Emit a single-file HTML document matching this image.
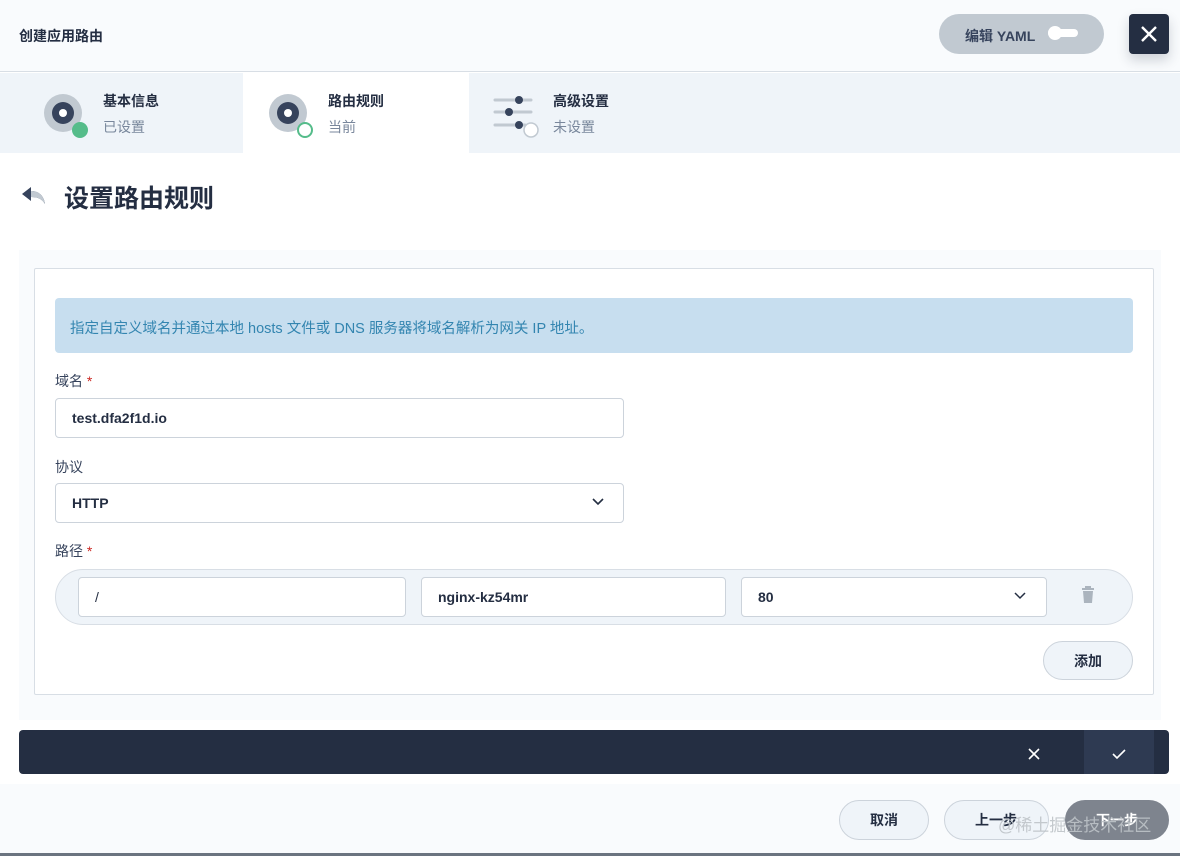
<!DOCTYPE html>
<html><head><meta charset="utf-8"><style>
*{box-sizing:border-box;margin:0;padding:0}
body{width:1180px;height:856px;position:relative;background:#fff;font-family:"Liberation Sans","Noto Sans CJK SC",sans-serif;color:#242e42;overflow:hidden}
.abs{position:absolute}
.inp{position:absolute;border:1px solid #ccd3db;border-radius:4px;background:#fff;font-size:14px;font-weight:bold;padding-left:16px;display:flex;align-items:center}
.btn{position:absolute;border:1px solid #ccd3db;border-radius:20px;background:#eff4f9;font-size:14px;font-weight:bold;display:flex;align-items:center;justify-content:center}
</style></head><body>
<div class="abs" style="left:0;top:0;width:1180px;height:72px;background:#f9fbfd;border-bottom:1px solid #d8dee5"></div>
<div class="abs" style="left:19px;top:26px;font-size:14px;font-weight:bold">创建应用路由</div>
<div class="abs" style="left:939px;top:14px;width:165px;height:40px;border-radius:20px;background:#c1c9d1"></div>
<div class="abs" style="left:965px;top:26px;font-size:14px;font-weight:bold;color:#36435c">编辑 YAML</div>
<div class="abs" style="left:1048px;top:29px;width:30px;height:8px;border-radius:4px;background:#fff"></div>
<div class="abs" style="left:1048px;top:26px;width:14px;height:14px;border-radius:7px;background:#fff"></div>
<div class="abs" style="left:1129px;top:14px;width:40px;height:40px;border-radius:4px;background:#242e42;box-shadow:0 6px 12px rgba(36,46,66,.2)"></div>
<svg class="abs" style="left:1139px;top:24px" width="20" height="20"><path d="M3 3L17 17M17 3L3 17" stroke="#fff" stroke-width="2.4"/></svg>

<div class="abs" style="left:0;top:73px;width:1180px;height:80px;background:#eff4f9"></div>
<div class="abs" style="left:243px;top:73px;width:226px;height:80px;background:#fff"></div>
<div class="abs" style="left:44px;top:94px;width:38px;height:38px;border-radius:50%;background:#c1c9d1"></div>
<div class="abs" style="left:52px;top:102px;width:22px;height:22px;border-radius:50%;background:#36435c"></div>
<div class="abs" style="left:59px;top:109px;width:8px;height:8px;border-radius:50%;background:#fff"></div>
<div class="abs" style="left:72px;top:122px;width:16px;height:16px;border-radius:50%;background:#55bc8a"></div>
<div class="abs" style="left:103px;top:91px;font-size:14px;font-weight:bold">基本信息</div>
<div class="abs" style="left:103px;top:117px;font-size:14px;color:#79879c">已设置</div>
<div class="abs" style="left:269px;top:94px;width:38px;height:38px;border-radius:50%;background:#c1c9d1"></div>
<div class="abs" style="left:277px;top:102px;width:22px;height:22px;border-radius:50%;background:#36435c"></div>
<div class="abs" style="left:284px;top:109px;width:8px;height:8px;border-radius:50%;background:#fff"></div>
<div class="abs" style="left:297px;top:122px;width:16px;height:16px;border-radius:50%;background:#fff;border:2px solid #55bc8a"></div>
<div class="abs" style="left:328px;top:91px;font-size:14px;font-weight:bold">路由规则</div>
<div class="abs" style="left:328px;top:117px;font-size:14px;color:#79879c">当前</div>
<svg class="abs" style="left:493px;top:94px" width="46" height="44">
<g stroke="#c1c9d1" stroke-width="3" stroke-linecap="round"><path d="M2 6H38M2 18H38M2 31H32"/></g>
<circle cx="26" cy="6" r="4" fill="#36435c"/><circle cx="16" cy="18" r="4" fill="#36435c"/><circle cx="26" cy="31" r="4" fill="#36435c"/>
<circle cx="38" cy="36" r="7" fill="#fff" stroke="#c1c9d1" stroke-width="1.5"/></svg>
<div class="abs" style="left:553px;top:91px;font-size:14px;font-weight:bold">高级设置</div>
<div class="abs" style="left:553px;top:117px;font-size:14px;color:#79879c">未设置</div>

<svg class="abs" style="left:21px;top:186px" width="26" height="20"><path d="M1 8L10 1V5C18 5 23 10 24 18C21 13 17 11 10 11V15Z" fill="#36435c"/><path d="M10 5C18 5 23 10 24 18C21 13 17 11 10 11Z" fill="#c1c9d1"/></svg>
<div class="abs" style="left:64px;top:179px;font-size:25px;font-weight:bold">设置路由规则</div>

<div class="abs" style="left:19px;top:250px;width:1142px;height:470px;background:#f9fbfd"></div>
<div class="abs" style="left:34px;top:268px;width:1120px;height:427px;background:#fff;border:1px solid #d8dee5;border-radius:2px"></div>
<div class="abs" style="left:55px;top:298px;width:1078px;height:55px;background:#c7deef;border-radius:4px"></div>
<div class="abs" style="left:70px;top:317px;font-size:14.5px;color:#3385b0">指定自定义域名并通过本地 hosts 文件或 DNS 服务器将域名解析为网关 IP 地址。</div>
<div class="abs" style="left:55px;top:371px;font-size:14px;color:#36435c">域名 <span style="color:#ca2621">*</span></div>
<div class="inp" style="left:55px;top:398px;width:569px;height:40px">test.dfa2f1d.io</div>
<div class="abs" style="left:55px;top:457px;font-size:14px;color:#36435c">协议</div>
<div class="inp" style="left:55px;top:483px;width:569px;height:40px">HTTP</div>
<svg class="abs" style="left:591px;top:497px" width="14" height="10"><path d="M2 2L7 7L12 2" stroke="#242e42" stroke-width="1.6" fill="none"/></svg>
<div class="abs" style="left:55px;top:541px;font-size:14px;color:#36435c">路径 <span style="color:#ca2621">*</span></div>
<div class="abs" style="left:55px;top:569px;width:1078px;height:56px;border-radius:28px;background:#eff4f9;border:1px solid #d8dee5"></div>
<div class="inp" style="left:78px;top:577px;width:328px;height:40px;font-weight:normal">/</div>
<div class="inp" style="left:421px;top:577px;width:305px;height:40px">nginx-kz54mr</div>
<div class="inp" style="left:741px;top:577px;width:306px;height:40px">80</div>
<svg class="abs" style="left:1013px;top:591px" width="14" height="10"><path d="M2 2L7 7L12 2" stroke="#242e42" stroke-width="1.5" fill="none"/></svg>
<svg class="abs" style="left:1080px;top:586px" width="16" height="18"><path d="M2 3H14M6 3V1H10V3" stroke="#abb4be" stroke-width="2" fill="none"/><path d="M3 5H13L12 17H4Z" fill="#abb4be"/></svg>
<div class="btn" style="left:1043px;top:641px;width:90px;height:39px">添加</div>

<div class="abs" style="left:19px;top:730px;width:1150px;height:44px;background:#242e42;border-radius:4px"></div>
<div class="abs" style="left:1084px;top:730px;width:70px;height:44px;background:#2e3a52"></div>
<svg class="abs" style="left:1027px;top:747px" width="14" height="14"><path d="M2 2L12 12M12 2L2 12" stroke="#fff" stroke-width="1.6"/></svg>
<svg class="abs" style="left:1111px;top:748px" width="16" height="12"><path d="M2 6L6 10L14 2" stroke="#fff" stroke-width="1.6" fill="none"/></svg>

<div class="abs" style="left:0;top:784px;width:1180px;height:72px;background:#f9fbfd;border-bottom:3px solid #6b7480"></div>
<div class="btn" style="left:839px;top:800px;width:90px;height:40px">取消</div>
<div class="btn" style="left:944px;top:800px;width:105px;height:40px;justify-content:flex-start;padding-left:30px">上一步</div>
<div class="btn" style="left:1065px;top:800px;width:104px;height:40px;background:#7e848e;border-color:#7e848e;color:#fff">下一步</div>
<div class="abs" style="left:998px;top:811px;font-size:17px;color:rgba(190,195,200,.9)">@稀土掘金技术社区</div>
</body></html>
